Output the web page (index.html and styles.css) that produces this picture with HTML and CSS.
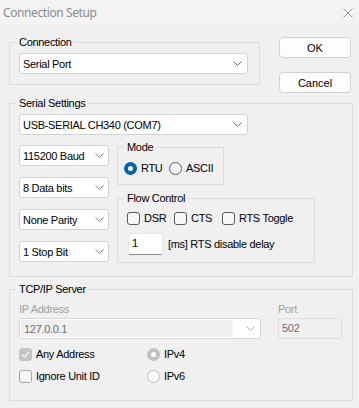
FILE: index.html
```html
<!DOCTYPE html>
<html lang="en">
<head>
    <meta charset="UTF-8">
    <meta name="viewport" content="width=device-width, initial-scale=1.0">
    <link rel="stylesheet" href="styles.css">
    <title>Connection Setup</title>
</head>
<body>
    <div class="titlebar">
        <span class="title">Connection Setup</span>
        <svg class="close" width="10" height="10" viewBox="0 0 10 10">
            <path d="M0.5 0.5 L9.5 9.5 M9.5 0.5 L0.5 9.5" stroke="#9a9a9a" stroke-width="1" fill="none"/>
        </svg>
    </div>

    <div class="dialog">
        <div class="toprow">
            <fieldset class="grp grp-conn">
                <legend>Connection</legend>
                <div class="combo w229">
                    <span class="val">Serial Port</span>
                    <svg class="chev" width="9" height="5" viewBox="0 0 9 5"><polyline points="0.5,0.5 4.5,4.5 8.5,0.5" fill="none" stroke="#6a6a6a"/></svg>
                </div>
            </fieldset>
            <div class="buttons">
                <button class="btn">OK</button>
                <button class="btn">Cancel</button>
            </div>
        </div>

        <fieldset class="grp grp-serial">
            <legend>Serial Settings</legend>
            <div class="combo w229">
                <span class="val">USB-SERIAL CH340 (COM7)</span>
                <svg class="chev" width="9" height="5" viewBox="0 0 9 5"><polyline points="0.5,0.5 4.5,4.5 8.5,0.5" fill="none" stroke="#6a6a6a"/></svg>
            </div>
            <div class="serial-body">
                <div class="params">
                    <div class="combo w90">
                        <span class="val">115200 Baud</span>
                        <svg class="chev" width="9" height="5" viewBox="0 0 9 5"><polyline points="0.5,0.5 4.5,4.5 8.5,0.5" fill="none" stroke="#8a8a8a"/></svg>
                    </div>
                    <div class="combo w90">
                        <span class="val">8 Data bits</span>
                        <svg class="chev" width="9" height="5" viewBox="0 0 9 5"><polyline points="0.5,0.5 4.5,4.5 8.5,0.5" fill="none" stroke="#8a8a8a"/></svg>
                    </div>
                    <div class="combo w90">
                        <span class="val">None Parity</span>
                        <svg class="chev" width="9" height="5" viewBox="0 0 9 5"><polyline points="0.5,0.5 4.5,4.5 8.5,0.5" fill="none" stroke="#8a8a8a"/></svg>
                    </div>
                    <div class="combo w90">
                        <span class="val">1 Stop Bit</span>
                        <svg class="chev" width="9" height="5" viewBox="0 0 9 5"><polyline points="0.5,0.5 4.5,4.5 8.5,0.5" fill="none" stroke="#8a8a8a"/></svg>
                    </div>
                </div>
                <div class="side">
                    <fieldset class="grp grp-mode">
                        <legend>Mode</legend>
                        <div class="opts">
                            <label class="opt opt-rtu"><span class="radio on"></span>RTU</label>
                            <label class="opt"><span class="radio"></span>ASCII</label>
                        </div>
                    </fieldset>
                    <fieldset class="grp grp-flow">
                        <legend>Flow Control</legend>
                        <div class="opts">
                            <label class="opt opt-dsr"><span class="chk"></span>DSR</label>
                            <label class="opt opt-cts"><span class="chk"></span>CTS</label>
                            <label class="opt"><span class="chk"></span>RTS Toggle</label>
                        </div>
                        <div class="delay">
                            <div class="edit">1</div>
                            <span>[ms] RTS disable delay</span>
                        </div>
                    </fieldset>
                </div>
            </div>
        </fieldset>

        <fieldset class="grp grp-tcp">
            <legend>TCP/IP Server</legend>
            <div class="ip-row">
                <div class="ip-col">
                    <div class="dim">IP Address</div>
                    <div class="combo w242 disabled">
                        <span class="val">127.0.0.1</span>
                        <svg class="chev" width="9" height="5" viewBox="0 0 9 5"><polyline points="0.5,0.5 4.5,4.5 8.5,0.5" fill="none" stroke="#b5b5b5"/></svg>
                    </div>
                </div>
                <div class="port-col">
                    <div class="dim">Port</div>
                    <div class="edit port">502</div>
                </div>
            </div>
            <div class="tcp-opts">
                <label class="opt opt-any"><span class="chk on dis"><svg width="9" height="7" viewBox="0 0 9 7"><polyline points="1,3.5 3.5,6 8,1" fill="none" stroke="#fff" stroke-width="1.2"/></svg></span>Any Address</label>
                <label class="opt"><span class="radio on dis"></span>IPv4</label>
            </div>
            <div class="tcp-opts">
                <label class="opt opt-any"><span class="chk dis"></span>Ignore Unit ID</label>
                <label class="opt"><span class="radio dis"></span>IPv6</label>
            </div>
        </fieldset>
    </div>
</body>
</html>
```

FILE: styles.css
```css
*{
    margin: 0;
    padding: 0;
    box-sizing: border-box;
}
body{
    width: 359px;
    height: 408px;
    background: #f0f0f0;
    font-family: "Liberation Sans", Arial, sans-serif;
    font-size: 11px;
    letter-spacing: -0.3px;
    line-height: 14px;
    color: #000;
    overflow: hidden;
}
.titlebar{
    height: 25px;
    background: #f3f3f3;
    display: flex;
    align-items: center;
    padding-left: 3px;
}
.title{
    font-family: "Noto Sans", sans-serif;
    font-size: 12px;
    letter-spacing: -0.4px;
    color: #8c8c8c;
}
.close{
    margin-left: auto;
    margin-right: 6px;
}
.dialog{
    padding-left: 9px;
}

/* group boxes */
.grp{
    border: 1px solid #dcdcdc;
    padding: 0 9px 10px 9px;
    min-width: 0;
}
.grp legend{
    margin-left: -3px;
    padding: 0 2px 0 3px;
    line-height: 14px;
}

.toprow{
    display: flex;
    align-items: flex-start;
}
.grp-conn{
    width: 251px;
    margin-top: 10px;
}
.grp-conn .combo{
    margin-top: 4px;
}
.buttons{
    margin-left: 19px;
    margin-top: 12px;
    display: flex;
    flex-direction: column;
    gap: 14px;
}
.btn{
    width: 72px;
    height: 21px;
    background: #fdfdfd;
    border: 1px solid #d0d0d0;
    border-radius: 4px;
    font: inherit;
    color: #000;
}

/* combo boxes */
.combo{
    height: 21px;
    background: #fff;
    border: 1px solid #d2d2d2;
    border-radius: 3px;
    display: flex;
    align-items: center;
    padding: 0 5px 0 3px;
}
.combo .val{
    flex: 1;
    white-space: nowrap;
}
.w229{ width: 229px; }
.w90{ width: 90px; padding-right: 4px; }
.w242{ width: 242px; }
.combo.disabled{
    border-color: #d5d5d5;
    padding: 1px 5px 1px 1px;
    align-items: stretch;
}
.combo.disabled .val{
    background: #f0f0f0;
    color: #6d6d6d;
    padding-left: 3px;
    display: flex;
    align-items: center;
    margin-right: 13px;
}
.combo.disabled .chev{
    align-self: center;
}

.grp-serial{
    width: 344px;
    margin-top: 3px;
    padding-bottom: 13px;
}
.grp-serial > .combo{
    margin-top: 4px;
}
.serial-body{
    display: flex;
    margin-top: 5px;
}
.params{
    display: flex;
    flex-direction: column;
    gap: 11px;
    padding-top: 5px;
}
.side{
    margin-left: 8px;
}
.grp-mode{
    width: 107px;
    padding: 0 6px 9px 6px;
}
.grp-mode legend{
    margin-left: 0;
}
.opts{
    display: flex;
    align-items: center;
}
.grp-mode .opts{
    margin-top: 7px;
}
.opt{
    display: flex;
    align-items: center;
    white-space: nowrap;
}
.opt-rtu{ width: 45px; }
.opt-dsr{ width: 47px; }
.opt-cts{ width: 48px; }

.radio{
    width: 13px;
    height: 13px;
    border-radius: 50%;
    border: 1px solid #5a5a5a;
    background: #f7f7f7;
    margin-right: 4px;
}
.radio.on{
    border: 4px solid #005fb8;
    background: #fff;
}
.radio.dis{
    border-color: #bdbdbd;
}
.radio.on.dis{
    border-color: #c2c2c2;
}
.chk{
    width: 13px;
    height: 13px;
    border-radius: 3px;
    border: 1px solid #5a5a5a;
    background: #f7f7f7;
    margin-right: 4px;
    display: flex;
    align-items: center;
    justify-content: center;
}
.chk.dis{
    border-color: #a5a5a5;
}
.chk.on.dis{
    background: #c4c4c4;
    border-color: #c4c4c4;
}

.grp-flow{
    width: 198px;
    margin-top: 6px;
    padding-bottom: 7px;
}
.grp-flow .opts{
    margin-top: 6px;
}
.delay{
    display: flex;
    align-items: center;
    margin-top: 8px;
    margin-left: 1px;
}
.edit{
    width: 35px;
    height: 22px;
    background: #fff;
    border: 1px solid #e6e6e6;
    border-bottom-color: #8a8a8a;
    border-radius: 2px;
    padding: 2px 0 0 3px;
    margin-right: 5px;
}

/* tcp */
.grp-tcp{
    width: 344px;
    margin-top: 5px;
    padding-bottom: 17px;
}
.ip-row{
    display: flex;
    margin-top: 6px;
}
.dim{
    color: #a0a0a0;
    margin-bottom: 2px;
}
.port-col{
    margin-left: 17px;
}
.edit.port{
    width: 64px;
    height: 21px;
    background: #f0f0f0;
    border: 1px solid #dedede;
    color: #6d6d6d;
    margin-right: 0;
}
.tcp-opts{
    display: flex;
    margin-top: 8px;
}
.opt-any{ width: 128px; }
```
